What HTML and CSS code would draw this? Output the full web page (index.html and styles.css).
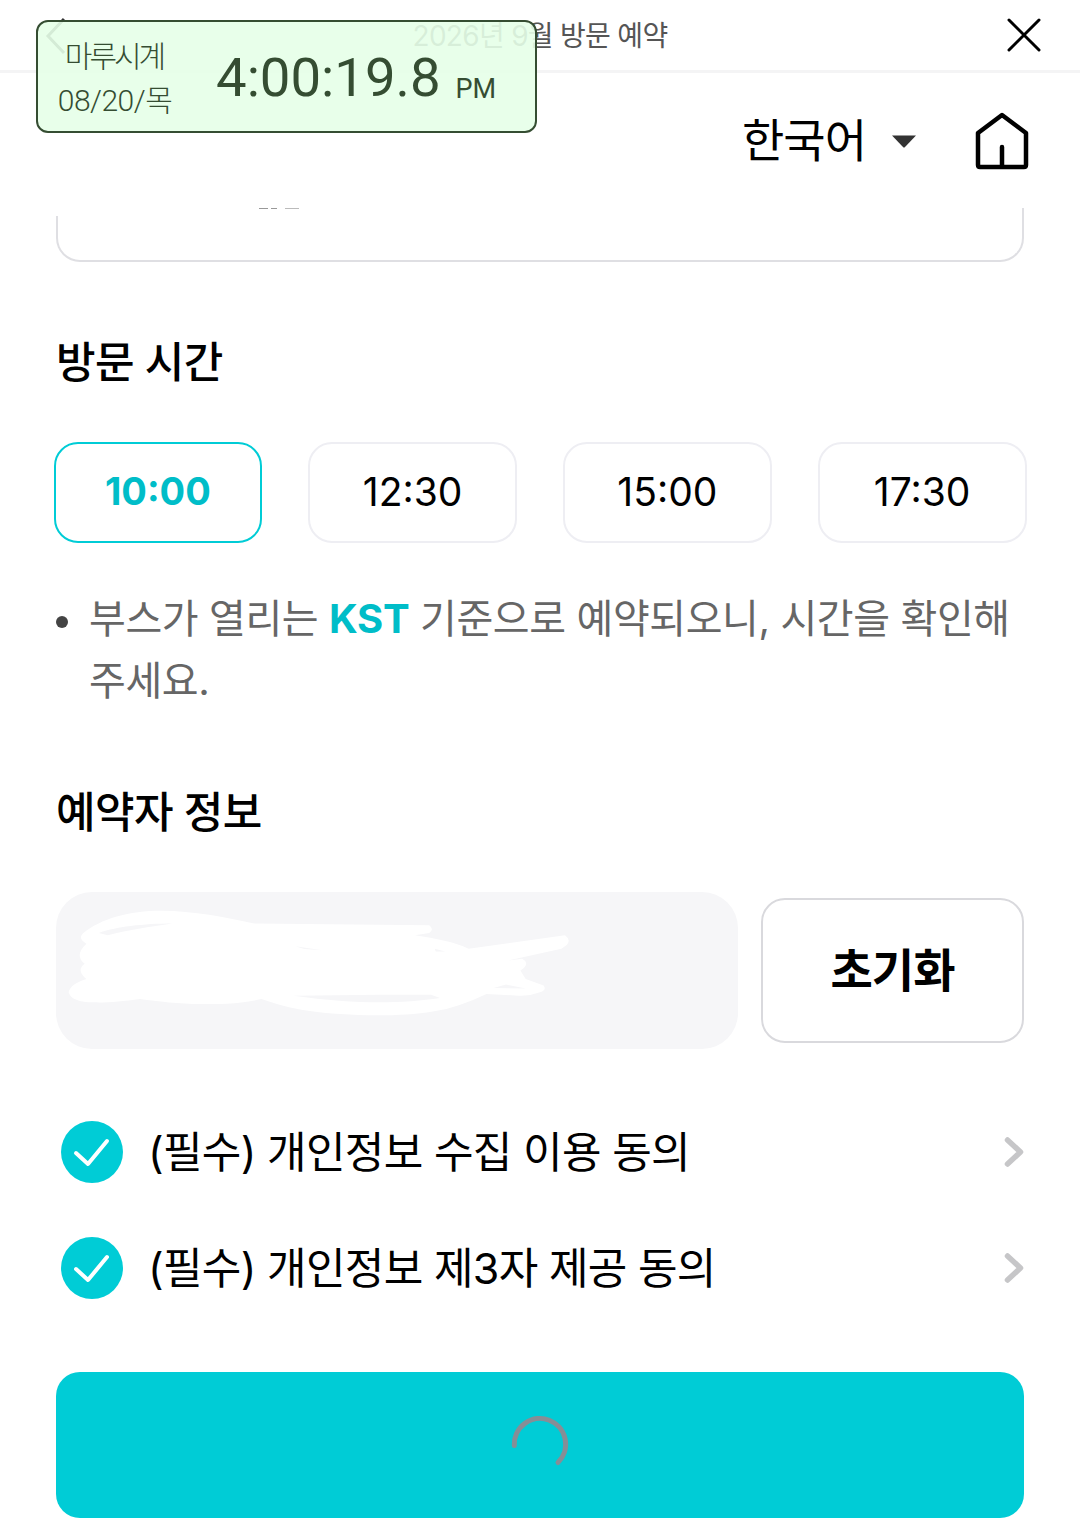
FILE: index.html
```html
<!DOCTYPE html>
<html lang="ko">
<head>
  <title>2026년 9월 방문 예약</title>
  <meta http-equiv="Content-Type" content="text/html; charset=utf-8" />
  <link rel="stylesheet" href="styles.css">
</head>
<body>
  <div class="top-bar">
    <svg class="back-icon" width="24" height="40" viewBox="0 0 24 40"><path d="M20 3 L4 20 L20 37" fill="none" stroke="#333" stroke-width="3"/></svg>
    <div class="top-title">2026년 9월 방문 예약</div>
    <svg class="close-icon" width="34" height="34" viewBox="0 0 34 34"><path d="M2 2 L32 32 M32 2 L2 32" fill="none" stroke="#000" stroke-width="3" stroke-linecap="round"/></svg>
  </div>

  <div class="clock">
    <div class="clock-date">
      <div class="clock-name">마루시계</div>
      <div class="clock-day">08/20/목</div>
    </div>
    <div class="clock-time">4:00:19.8</div>
    <div class="clock-ampm">PM</div>
  </div>

  <div class="lang-row">
    <div class="lang">한국어</div>
    <svg class="lang-arrow" width="26" height="14" viewBox="0 0 26 14"><path d="M1 1.5 H25 L14 13 Q13 14 12 13 Z" fill="#333"/></svg>
    <svg class="home-icon" width="54" height="58" viewBox="0 0 54 58"><path d="M27 3 L51 21 V53 Q51 55 49 55 H5 Q3 55 3 53 V21 Z M27 35 V54" fill="none" stroke="#000" stroke-width="4.5" stroke-linejoin="round" stroke-linecap="round"/></svg>
  </div>

  <div class="main">
    <div class="date-card"><span class="card-clip"></span><span class="card-cut"></span></div>

    <h2 class="section-title time-title">방문 시간</h2>
    <div class="time-list">
      <div class="time-btn active">10:00</div>
      <div class="time-btn">12:30</div>
      <div class="time-btn">15:00</div>
      <div class="time-btn">17:30</div>
    </div>

    <div class="notice">
      <span class="dot"></span>
      <p>부스가 열리는 <b>KST</b> 기준으로 예약되오니, 시간을 확인해 주세요.</p>
    </div>

    <h2 class="section-title user-title">예약자 정보</h2>
    <div class="user-row">
      <div class="user-input">
        <svg class="scribble" viewBox="44.8 36 1909.6 468" preserveAspectRatio="none">
          <path d="M120 160 C170 115 250 92 340 92 C430 92 520 112 600 130 L1090 135 Q1105 148 1090 158 L1050 165 C1110 175 1160 185 1200 205 L1470 165 Q1495 185 1460 205 L1310 240 L1350 235 Q1375 250 1345 270 L1360 295 L1410 315 Q1420 328 1400 335 Q1370 347 1340 345 L1250 340 C1200 365 1150 385 1100 392 C1000 410 850 405 750 390 C700 382 660 370 620 355 C560 370 500 370 450 370 C390 370 330 362 280 355 C230 362 180 367 150 365 C110 365 85 355 80 335 Q85 310 130 295 Q100 270 125 250 Q95 225 130 190 Q105 175 120 160 Z" fill="#fff"/>
          <path d="M165 158 C210 140 290 130 370 130 C310 140 240 150 190 165 Z M715 198 L790 210 L740 206 Z M1105 205 L1135 213 L1108 213 Z M710 345 C800 358 880 365 950 365 C1010 365 1070 360 1120 352 L1095 342 L950 342 Z M1270 322 L1305 312 L1360 324 Z" fill="#f6f6f8"/>
        </svg>
      </div>
      <div class="reset-btn">초기화</div>
    </div>

    <div class="agree-row">
      <svg class="check-icon" width="62" height="62" viewBox="0 0 62 62"><circle cx="31" cy="31" r="31" fill="#00ccd6"/><path d="M15 32 L27 43 L46 20" fill="none" stroke="#fff" stroke-width="4" stroke-linecap="round" stroke-linejoin="round"/></svg>
      <div class="agree-text">(필수) 개인정보 수집 이용 동의</div>
      <svg class="chevron" width="22" height="34" viewBox="0 0 22 34"><path d="M4.5 5 L17.5 17 L4.5 29" fill="none" stroke="#c6c6c8" stroke-width="5.5" stroke-linecap="round" stroke-linejoin="round"/></svg>
    </div>
    <div class="agree-row">
      <svg class="check-icon" width="62" height="62" viewBox="0 0 62 62"><circle cx="31" cy="31" r="31" fill="#00ccd6"/><path d="M15 32 L27 43 L46 20" fill="none" stroke="#fff" stroke-width="4" stroke-linecap="round" stroke-linejoin="round"/></svg>
      <div class="agree-text">(필수) 개인정보 제3자 제공 동의</div>
      <svg class="chevron" width="22" height="34" viewBox="0 0 22 34"><path d="M4.5 5 L17.5 17 L4.5 29" fill="none" stroke="#c6c6c8" stroke-width="5.5" stroke-linecap="round" stroke-linejoin="round"/></svg>
    </div>

    <div class="submit-btn">
      <svg width="60" height="60" viewBox="0 0 60 60"><path d="M4.3 30.5 A25.7 25.7 0 1 1 48 47.5" fill="none" stroke="#868e96" stroke-width="5" stroke-linecap="round"/></svg>
    </div>
  </div>
</body>
</html>
```

FILE: styles.css
```css
html, body {
  margin: 0;
  padding: 0;
  background-color: #fff;
}

body {
  font-family: Inter, "Noto Sans CJK KR", sans-serif;
  color: #000;
  width: 1080px;
  height: 1533px;
  overflow: hidden;
  position: relative;
}

.top-bar {
  height: 70px;
  border-bottom: 3px solid #f4f4f5;
  display: flex;
  align-items: center;
  justify-content: center;
  position: relative;
}

.top-title {
  font-size: 28px;
  letter-spacing: -0.7px;
  color: #555;
  margin-bottom: 2px;
}

.back-icon {
  position: absolute;
  left: 44px;
  top: 16px;
}

.close-icon {
  position: absolute;
  left: 1007px;
  top: 18px;
}

.clock {
  position: absolute;
  left: 36px;
  top: 20px;
  width: 501px;
  height: 113px;
  box-sizing: border-box;
  border: 2px solid #354d32;
  border-radius: 12px;
  background-color: rgba(230, 255, 232, 0.9);
  color: #354d32;
  display: flex;
  align-items: center;
  font-family: Roboto, "Noto Sans CJK KR", sans-serif;
}

.clock-date {
  width: 154px;
  padding-top: 4px;
  text-align: center;
  font-size: 30px;
  font-weight: 300;
  line-height: 44px;
  letter-spacing: -0.5px;
}

.clock-name {
  letter-spacing: -3px;
  padding-right: 2px;
}

.clock-time {
  font-size: 54.5px;
  margin: 0 15px 0 24px;
}

.clock-ampm {
  font-size: 27px;
  margin-top: 24px;
}

.lang-row {
  height: 135px;
  display: flex;
  align-items: center;
  justify-content: flex-end;
  padding-right: 51px;
}

.lang {
  font-size: 46px;
  letter-spacing: -1px;
  margin: 0 25px 7px 0;
}

.lang-arrow {
  margin-right: 58px;
}

.main {
  padding: 0 56px;
}

.date-card {
  height: 54px;
  box-sizing: border-box;
  border: 2px solid #dfdfe3;
  border-top: none;
  border-radius: 0 0 24px 24px;
  position: relative;
}

.card-clip {
  position: absolute;
  left: -2px;
  top: 0;
  width: 4px;
  height: 8px;
  background-color: #fff;
}

/* bottom edge of the text cut off by the scroll */
.card-cut {
  position: absolute;
  left: 201px;
  top: 0;
  width: 40px;
  height: 1px;
  background: linear-gradient(90deg, #999 0, #999 9px, #fff 9px, #fff 12px, #999 12px, #999 18px, #fff 18px, #fff 26px, #bbb 26px);
}

.section-title {
  font-size: 43px;
  font-weight: 500;
  letter-spacing: -0.6px;
  line-height: 60px;
  margin: 0;
}

.time-title {
  margin-top: 70px;
}

.user-title {
  margin-top: 70px;
}

.time-list {
  display: grid;
  grid-template-columns: repeat(4, 1fr);
  gap: 46px;
  margin: 50px -2.5px 0;
}

.time-btn {
  height: 101px;
  box-sizing: border-box;
  border: 2px solid #eeeef3;
  border-radius: 24px;
  display: flex;
  align-items: center;
  justify-content: center;
  font-size: 39px;
  padding-bottom: 3px;
}

.time-btn.active {
  border-color: #00ccd6;
  color: #00bdc8;
  font-weight: 700;
  font-size: 38px;
}

.notice {
  display: flex;
  margin-top: 45px;
  font-size: 40px;
  line-height: 62px;
  color: #666;
  letter-spacing: -0.4px;
}

.notice p {
  margin: 0;
  flex: 1;
}

.notice b {
  color: #00bdc8;
  font-weight: 700;
}

.dot {
  width: 12px;
  height: 12px;
  border-radius: 50%;
  background-color: #444;
  margin: 28px 21px 0 0;
}

.user-row {
  display: flex;
  align-items: center;
  gap: 23px;
  margin-top: 50px;
}

.user-input {
  width: 682px;
  height: 157px;
  border-radius: 36px;
  background-color: #f6f6f8;
  position: relative;
}

.scribble {
  position: absolute;
  left: 0;
  top: 0;
  width: 100%;
  height: 100%;
}

.reset-btn {
  width: 263px;
  height: 145px;
  box-sizing: border-box;
  border: 2px solid #d9d9dd;
  border-radius: 24px;
  display: flex;
  align-items: center;
  justify-content: center;
  font-size: 46px;
  font-weight: 700;
  letter-spacing: -1px;
  padding-bottom: 7px;
}

.agree-row {
  display: flex;
  align-items: center;
  height: 62px;
  padding-left: 5px;
  margin-top: 54px;
}

.user-row + .agree-row {
  margin-top: 72px;
}

.agree-text {
  flex: 1;
  font-size: 43px;
  letter-spacing: -0.7px;
  margin-left: 25px;
  padding-bottom: 7px;
}

.chevron {
  margin-right: -1px;
}

.submit-btn {
  height: 146px;
  border-radius: 24px;
  background-color: #00ccd6;
  display: flex;
  align-items: center;
  justify-content: center;
  margin-top: 73px;
}
```
